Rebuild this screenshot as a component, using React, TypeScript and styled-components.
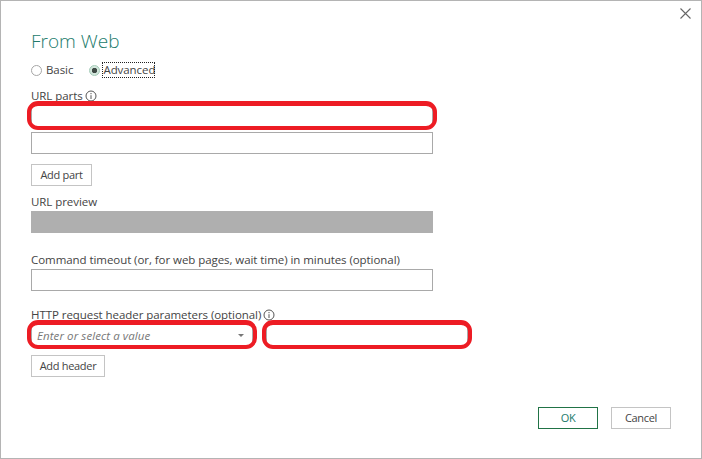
import { createGlobalStyle } from 'styled-components'
import styled from 'styled-components'

const GlobalStyle = createGlobalStyle`
  html, body {
    margin: 0;
    padding: 0;
    background: #fff;
  }
  * {
    box-sizing: border-box;
  }
`

const Dialog = styled.div`
  position: relative;
  width: 702px;
  height: 459px;
  background: #fff;
  border: 1px solid #b4b4b4;
  padding: 0 30px;
  display: flex;
  flex-direction: column;
  font-family: 'Open Sans', 'Noto Sans', sans-serif;
  font-size: 11.5px;
  letter-spacing: -0.06px;
  color: #444;
  overflow: hidden;
`

const CloseButton = styled.svg`
  position: absolute;
  top: 7px;
  right: 10px;
  width: 11px;
  height: 11px;
`

const Title = styled.h1`
  margin: 27px 0 0;
  height: 26px;
  font-size: 19px;
  line-height: 26px;
  font-weight: 300;
  letter-spacing: 0;
  color: #217a6b;
`

const RadioRow = styled.div`
  display: flex;
  align-items: center;
  height: 16px;
  margin-top: 8px;
`

const RadioCircle = styled.span<{ $checked?: boolean }>`
  width: 11px;
  height: 11px;
  border-radius: 50%;
  border: 1px solid ${({ $checked }) => ($checked ? '#a3ccb8' : '#a6a6a6')};
  background: ${({ $checked }) =>
    $checked ? 'radial-gradient(circle, #3f4a45 0 2.4px, #d3e6dc 3px)' : '#fff'};
  flex: none;
`

const RadioLabel = styled.span<{ $focused?: boolean }>`
  margin-left: ${({ $focused }) => ($focused ? '2px' : '3px')};
  margin-right: ${({ $focused }) => ($focused ? '0' : '15px')};
  line-height: 16px;
  padding: ${({ $focused }) => ($focused ? '0 0 0 1px' : '0 1px')};
  outline: ${({ $focused }) => ($focused ? '1px dotted #222' : 'none')};
  outline-offset: -1px;
`

const Label = styled.div<{ $top: number }>`
  display: flex;
  align-items: center;
  gap: 2px;
  height: 16px;
  line-height: 16px;
  margin-top: ${({ $top }) => $top}px;
`

const InfoIcon = styled.svg`
  width: 12px;
  height: 12px;
  flex: none;
`

const Field = styled.div<{ $top: number; $width?: number }>`
  position: relative;
  width: ${({ $width }) => ($width ? `${$width}px` : '402px')};
  height: 22px;
  margin-top: ${({ $top }) => $top}px;
  border: 1px solid #a9a9a9;
  background: #fff;
  display: flex;
  align-items: center;
  justify-content: space-between;
  padding: 0 8px 0 5px;
`

const Placeholder = styled.span`
  font-style: italic;
  letter-spacing: 0.08px;
  color: #777;
`

const Caret = styled.span`
  width: 0;
  height: 0;
  border-left: 3px solid transparent;
  border-right: 3px solid transparent;
  border-top: 3px solid #777;
`

const Ring = styled.span`
  position: absolute;
  inset: -5px -5px -4px -5px;
  border: 4px solid #ed1c24;
  border-top-width: 5px;
  border-radius: 11px;
  pointer-events: none;
`

const GhostButton = styled.button<{ $top: number; $width: number }>`
  width: ${({ $width }) => $width}px;
  height: 22px;
  margin-top: ${({ $top }) => $top}px;
  padding: 0 0 2px;
  border: 1px solid #c4c4c4;
  background: #fff;
  color: #444;
  font: inherit;
  font-size: 11px;
  letter-spacing: -0.3px;
`

const Preview = styled.div`
  width: 402px;
  height: 22px;
  margin-top: 1px;
  background: #afafaf;
`

const HeaderRow = styled.div`
  display: flex;
  gap: 13px;
`

const Footer = styled.div`
  margin-top: 30px;
  display: flex;
  justify-content: flex-end;
  gap: 13px;
`

const ActionButton = styled.button<{ $primary?: boolean }>`
  width: 60px;
  height: 22px;
  padding: 0 0 2px;
  background: #fff;
  font: inherit;
  font-size: 11px;
  letter-spacing: -0.3px;
  color: ${({ $primary }) => ($primary ? '#217a6b' : '#444')};
  border: 1px solid ${({ $primary }) => ($primary ? '#217346' : '#c4c4c4')};
`

const Info = () => (
  <InfoIcon viewBox="0 0 12 12">
    <circle cx="6" cy="6" r="5" fill="none" stroke="#555" strokeWidth="1" />
    <path d="M6 5.2V9M6 3v1.2" stroke="#555" strokeWidth="1" fill="none" />
  </InfoIcon>
)

const App = () => {
  return (
    <>
      <GlobalStyle />
      <Dialog>
        <CloseButton viewBox="0 0 11 11">
          <path d="M0.5 0.5L10.5 10.5M10.5 0.5L0.5 10.5" stroke="#666" strokeWidth="1.1" fill="none" />
        </CloseButton>
        <Title>From Web</Title>
        <RadioRow>
          <RadioCircle />
          <RadioLabel>Basic</RadioLabel>
          <RadioCircle $checked />
          <RadioLabel $focused>Advanced</RadioLabel>
        </RadioRow>
        <Label $top={10}>
          URL parts <Info />
        </Label>
        <Field $top={1}>
          <Ring />
        </Field>
        <Field $top={5} />
        <GhostButton $top={10} $width={61}>
          Add part
        </GhostButton>
        <Label $top={8}>URL preview</Label>
        <Preview />
        <Label $top={19}>Command timeout (or, for web pages, wait time) in minutes (optional)</Label>
        <Field $top={1} />
        <Label $top={16}>
          HTTP request header parameters (optional) <Info />
        </Label>
        <HeaderRow>
          <Field $top={1} $width={222}>
            <Placeholder>Enter or select a value</Placeholder>
            <Caret />
            <Ring />
          </Field>
          <Field $top={1} $width={202}>
            <Ring />
          </Field>
        </HeaderRow>
        <GhostButton $top={9} $width={74}>
          Add header
        </GhostButton>
        <Footer>
          <ActionButton $primary>OK</ActionButton>
          <ActionButton>Cancel</ActionButton>
        </Footer>
      </Dialog>
    </>
  )
}

export default App
